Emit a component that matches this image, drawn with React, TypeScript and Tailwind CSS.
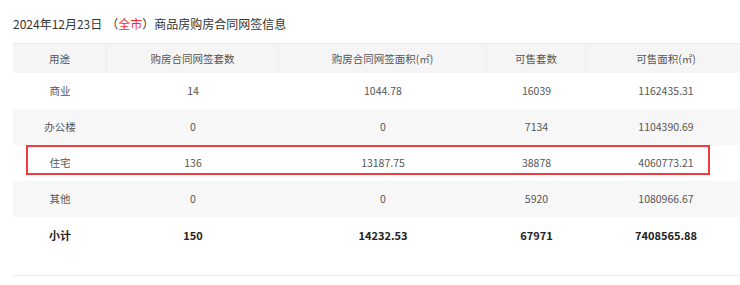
import React from 'react';

type Row = { use: string; count: string; area: string; saleCount: string; saleArea: string };

const rows: Row[] = [
  { use: '商业', count: '14', area: '1044.78', saleCount: '16039', saleArea: '1162435.31' },
  { use: '办公楼', count: '0', area: '0', saleCount: '7134', saleArea: '1104390.69' },
  { use: '住宅', count: '136', area: '13187.75', saleCount: '38878', saleArea: '4060773.21' },
  { use: '其他', count: '0', area: '0', saleCount: '5920', saleArea: '1080966.67' },
];

const total: Row = { use: '小计', count: '150', area: '14232.53', saleCount: '67971', saleArea: '7408565.88' };

const heads = ['用途', '购房合同网签套数', '购房合同网签面积(㎡)', '可售套数', '可售面积(㎡)'];

const cols = 'grid grid-cols-[94px_172px_208px_99px_160px]';

function DataRow({ row, striped, bold }: { row: Row; striped?: boolean; bold?: boolean }) {
  const cells = [row.use, row.count, row.area, row.saleCount, row.saleArea];
  return (
    <div
      className={`${cols} h-[36px] items-center text-center ${striped ? 'bg-[#f7f7f7]' : 'bg-white'} ${
        bold ? 'font-bold text-[#222] text-[11px]' : 'text-[#555] text-[10.5px]'
      }`}
    >
      {cells.map((c, i) => (
        <div key={i}>{c}</div>
      ))}
    </div>
  );
}

export default function App() {
  return (
    <div className="w-[740px] h-[285px] overflow-hidden bg-white font-['Noto_Sans_CJK_SC',sans-serif]">
      <div className="pl-[13px] pt-[14px] h-[33px] leading-[20px] text-[12px] text-[#333]">
        2024年12月23日
        <span className="ml-[4px]">（</span>
        <span className="text-[#ff2a2a]">全市</span>
        <span>）</span>商品房购房合同网签信息
      </div>

      <div className="relative mt-[10px] ml-[13px] w-[733px] border-t border-[#e6e6e6]">
        <div className={`${cols} h-[29px] bg-[#f5f5f5] text-[10.5px] text-[#555]`}>
          {heads.map((h, i) => (
            <div key={h} className={`flex items-center justify-center ${i < 4 ? 'border-r border-[#ebebeb]' : ''}`}>
              {h}
            </div>
          ))}
        </div>

        {rows.map((r, i) => (
          <DataRow key={r.use} row={r} striped={i % 2 === 1} />
        ))}
        <DataRow row={total} bold />

        <div className="h-[23px] border-b border-[#ededed]" />

        {/* highlight around the 住宅 row */}
        <div className="absolute left-[13px] top-[101px] w-[684px] h-[30px] border-2 border-[#f03c3c]" />
      </div>
    </div>
  );
}
